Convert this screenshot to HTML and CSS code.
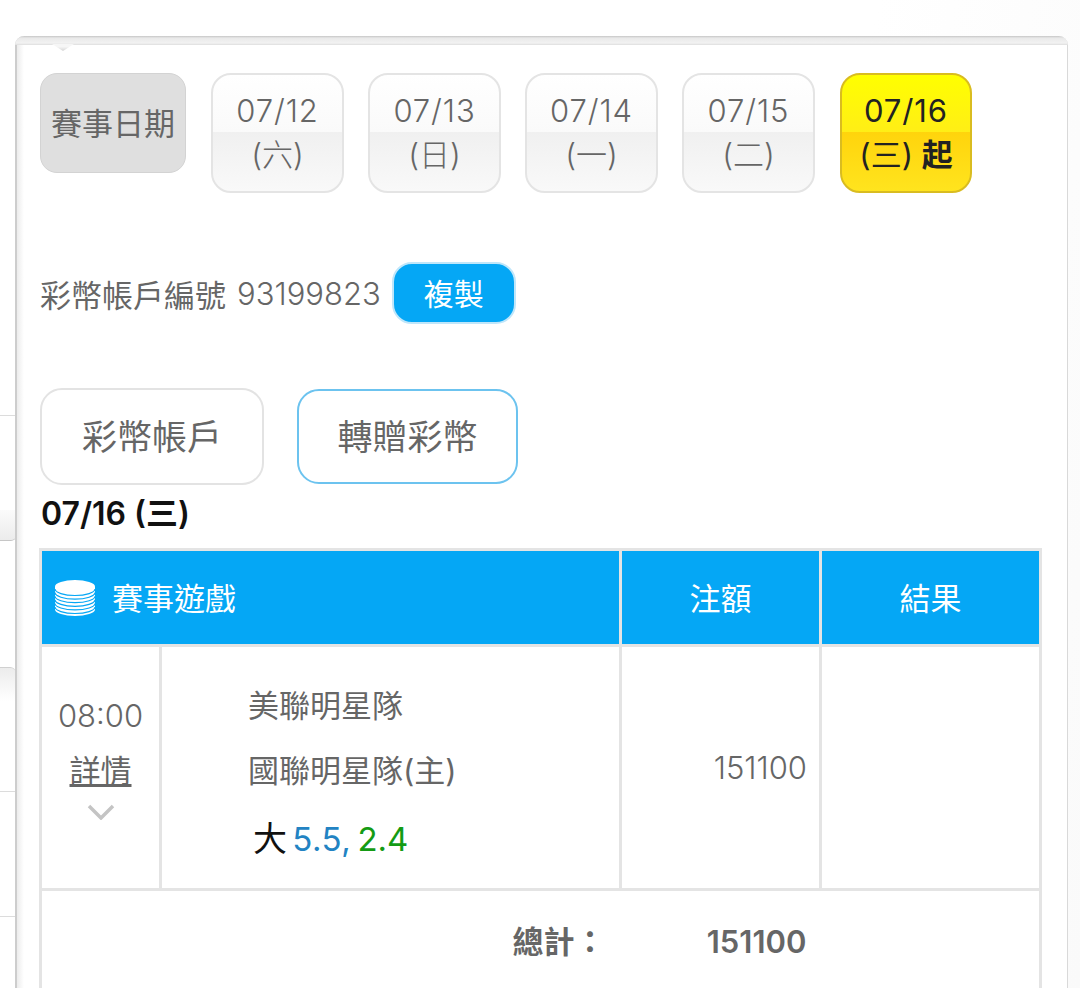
FILE: index.html
```html
<!DOCTYPE html>
<html lang="zh-Hant">
<head>
<meta charset="utf-8">
<title>賽事日期</title>
<link rel="stylesheet" href="styles.css">
</head>
<body>
<div class="backdrop">
  <i class="edge edge-a"></i><i class="edge edge-b"></i><i class="edge edge-c"></i>
  <i class="chip chip-a"></i><i class="chip chip-b"></i>
</div>
<main class="panel">
  <div class="band"></div>
  <div class="notch"></div>
  <div class="dates">
    <div class="date-label">賽事日期</div>
    <div class="date"><span class="date-num">07/12</span><span class="date-day">(六)</span></div>
    <div class="date"><span class="date-num">07/13</span><span class="date-day">(日)</span></div>
    <div class="date"><span class="date-num">07/14</span><span class="date-day">(一)</span></div>
    <div class="date"><span class="date-num">07/15</span><span class="date-day">(二)</span></div>
    <div class="date active"><span class="date-num">07/16</span><span class="date-day">(三) <b>起</b></span></div>
  </div>
  <div class="account">
    <span>彩幣帳戶編號</span><span class="acct-num">93199823</span>
    <button class="copy">複製</button>
  </div>
  <div class="tabs">
    <button class="tab">彩幣帳戶</button>
    <button class="tab tab-on">轉贈彩幣</button>
  </div>
  <div class="day">07/16 (三)</div>
  <table class="bets">
    <colgroup><col class="c1"><col class="c2"><col class="c3"><col class="c4"></colgroup>
    <thead>
      <tr>
        <th colspan="2" class="game-head">
          <span class="game-title">
            <svg class="coins" viewBox="0 0 40 36" aria-hidden="true">
              <path d="M0 6.500A20 6.500 0 0 1 40 6.500V29.500A20 6.500 0 0 1 0 29.500Z" fill="#fff"/>
              <path d="M0 9A20 6.500 0 0 0 40 9M0 12.600A20 6.500 0 0 0 40 12.600M0 16.200A20 6.500 0 0 0 40 16.200M0 19.800A20 6.500 0 0 0 40 19.800M0 23.400A20 6.500 0 0 0 40 23.400M0 27A20 6.500 0 0 0 40 27" fill="none" stroke="#05a7f5" stroke-width="1.200"/>
            </svg>
            賽事遊戲
          </span>
        </th>
        <th>注額</th>
        <th>結果</th>
      </tr>
    </thead>
    <tbody>
      <tr class="match">
        <td class="time">
          <div class="clock">08:00</div>
          <a class="detail">詳情</a>
          <svg class="chev" viewBox="0 0 28 16" aria-hidden="true"><path d="M2 2l12 12L26 2" fill="none" stroke="#c4c4c4" stroke-width="3.500"/></svg>
        </td>
        <td class="teams">
          <div class="team team-a">美聯明星隊</div>
          <div class="team team-b">國聯明星隊(主)</div>
          <div class="odds"><span class="big">大</span> <span class="blue">5.5,</span> <span class="green">2.4</span></div>
        </td>
        <td class="amount">151100</td>
        <td></td>
      </tr>
      <tr class="total">
        <td colspan="2" class="total-label">總計：</td>
        <td class="amount">151100</td>
        <td></td>
      </tr>
    </tbody>
  </table>
</main>
</body>
</html>
```
FILE: styles.css
```css
* { box-sizing: border-box; }
html, body { margin: 0; height: 988px; overflow: hidden; }
body {
  position: relative;
  background: linear-gradient(100deg, #fff 70%, #fafafa 100%);
  font-family: Inter, "Noto Sans CJK TC", sans-serif;
  color: #666;
}
.backdrop i { position: absolute; left: 0; width: 16px; display: block; }
.edge { height: 1px; background: #dcdcdc; }
.edge-a { top: 415px; }
.edge-b { top: 791px; }
.edge-c { top: 916px; }
.chip-a {
  top: 510px;
  height: 31px;
  background: linear-gradient(#fbfbfb, #ececec);
  border-bottom: 1px solid #c6c6c6;
  border-radius: 0 0 5px 0;
}
.chip-b {
  top: 667px;
  height: 34px;
  background: linear-gradient(#ececec, #fff);
  border-top: 1px solid #d0d0d0;
  border-radius: 0 6px 0 0;
}

.panel {
  position: absolute;
  left: 15px;
  top: 36px;
  width: 1053px;
  height: 980px;
  padding: 37px 0 0 23px;
  background: linear-gradient(90deg, #ececec, #fff 7px);
  border-left: 2px solid #cdcdcd;
  border-right: 1px solid #d9d9d9;
  border-radius: 9px 9px 0 0;
}
.band {
  position: absolute;
  left: -2px;
  right: -1px;
  top: 0;
  height: 9px;
  border-radius: 9px 9px 0 0;
  background: linear-gradient(#c6c6c6, #e9e9e9 2px, #f2f2f2 7px, #dedede 9px);
}
.notch {
  position: absolute;
  left: 35px;
  top: 8px;
  width: 22px;
  height: 7px;
  background: linear-gradient(#f6f6f6 40%, #d4d4d4);
  clip-path: polygon(0 0, 100% 0, 50% 100%);
}

.dates { display: flex; align-items: flex-start; }
.date-label {
  width: 146px;
  height: 100px;
  padding-bottom: 4px;
  display: flex;
  align-items: center;
  justify-content: center;
  font-size: 31px;
  background: #dfdfdf;
  border: 1px solid #d3d3d3;
  border-radius: 17px;
}
.date {
  width: 133px;
  height: 120px;
  margin-left: 24px;
  display: flex;
  flex-direction: column;
  font-size: 31px;
  color: #666;
  border: 2px solid #e4e4e4;
  border-radius: 20px;
  overflow: hidden;
  background: linear-gradient(#fff, #fafafa 49%, #f0f0f0 49%, #f9f9f9);
}
.date-label + .date { margin-left: 25px; }
.date span { height: 44px; line-height: 44px; text-align: center; }
.date .date-num { margin-top: 14px; font-weight: 300; letter-spacing: .9px; }
.date .date-day { font-weight: 300; }
.date.active { width: 132px; margin-left: 25px; }
.active {
  color: #222;
  border-color: #d9bc20;
  background: linear-gradient(#ffff00, #ffee16 49%, #ffd40c 49%, #ffe41e);
}
.active .date-num, .active .date-day { font-weight: 400; }
.active b { font-weight: 700; }

.account {
  display: flex;
  align-items: center;
  margin-top: 68px;
  height: 64px;
  font-size: 31px;
}
.acct-num { font-weight: 300; margin-left: 11px; }
.copy {
  width: 124px;
  height: 62px;
  margin-left: 11px;
  padding-bottom: 3px;
  font: 30px Inter, "Noto Sans CJK TC", sans-serif;
  color: #fff;
  background: #05a7f5;
  border: 2px solid #bfe6fa;
  border-radius: 20px;
}

.tabs { display: flex; gap: 33px; margin-top: 63px; }
.tab {
  width: 224px;
  height: 97px;
  padding-bottom: 5px;
  font: 35px Inter, "Noto Sans CJK TC", sans-serif;
  color: #666;
  background: #fff;
  border: 2px solid #e3e3e3;
  border-radius: 22px;
}
.tab-on { width: 221px; height: 95px; margin-top: 1px; border-color: #6cc3ef; }

.day { margin-top: 8px; padding-left: 1px; height: 42px; line-height: 42px; font-size: 32px; font-weight: 600; color: #111; }

.bets {
  width: 1000px;
  margin: 13px 0 0 -1px;
  border-collapse: collapse;
  table-layout: fixed;
  font-size: 31px;
}
.c1 { width: 120px; }
.c2 { width: 460px; }
.c3 { width: 200px; }
.c4 { width: 220px; }
.bets th, .bets td { border: 3px solid #e4e4e4; padding: 0; }
.bets th { height: 96px; padding-bottom: 3px; background: #05a7f5; color: #fff; font-weight: 400; }
.game-head { text-align: left; }
.game-title { display: flex; align-items: center; gap: 17px; padding-left: 13px; }
.coins { width: 40px; height: 36px; margin-top: 3px; }
.match td { height: 244px; }
.bets td.time { text-align: center; vertical-align: top; padding-top: 45px; line-height: 48px; }
.clock { font-weight: 300; }
.detail { display: block; text-decoration: underline; line-height: 62px; height: 50px; }
.chev { display: block; width: 28px; height: 16px; margin: 14px auto 0; }
.bets td.teams { padding: 13px 0 0 86px; }
.team-a { height: 66px; line-height: 66px; }
.team-b { height: 64px; line-height: 64px; }
.odds { height: 72px; line-height: 72px; color: #111; padding-left: 5px; font-size: 33px; }
.big { font-size: 34px; color: #111; }
.blue { color: #2283c3; margin: 0 -3px 0 -4px; letter-spacing: .5px; }
.green { color: #149b14; }
.bets td.amount { text-align: right; padding-right: 12px; font-weight: 300; }
.total td { height: 106px; }
.bets .total td { border-left: 0; border-right: 0; }
.bets .total td:first-child { border-left: 3px solid #e4e4e4; }
.bets .total td:last-child { border-right: 3px solid #e4e4e4; }
.bets .total td.amount { font-weight: 600; padding: 0 14px 2px 0; }
.bets td.total-label { text-align: right; padding: 0 15px 6px 0; font-weight: 700; }
```
